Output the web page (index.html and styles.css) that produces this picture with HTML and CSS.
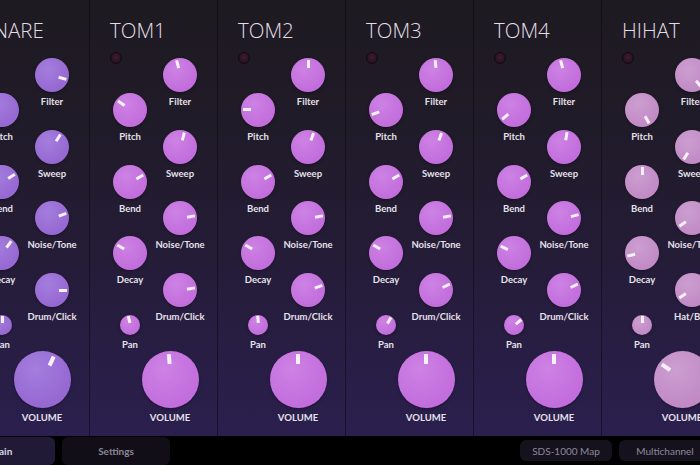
FILE: index.html
```html
<!DOCTYPE html>
<html lang="en">

<head>
    <meta charset="UTF-8">
    <meta name="viewport" content="width=device-width, initial-scale=1.0">
    <title>Drum Rack</title>
    <link rel="stylesheet" href="styles.css">
</head>

<body>
    <div class="rack" id="rack"></div>

    <div class="bar">
        <div class="tabs">
            <div class="tab active">Main</div>
            <div class="tab">Settings</div>
        </div>
        <div class="buttons">
            <div class="btn">SDS-1000 Map</div>
            <div class="btn">Multichannel</div>
        </div>
    </div>

    <script>
        // name, colour, right column angles, left column angles, volume angle, last right label
        const channels = [
            ['SNARE', 'snare', [105, 32, 70, 90], [-60, 57, 36, 0], 25, 'Drum/Click'],
            ['TOM1', 'tom', [-15, 15, 80, 80], [-55, 60, -60, -15], -5, 'Drum/Click'],
            ['TOM2', 'tom', [0, 20, 80, 70], [-90, 60, -60, -5], 0, 'Drum/Click'],
            ['TOM3', 'tom', [-5, 20, 80, 65], [-110, 60, -60, 30], 0, 'Drum/Click'],
            ['TOM4', 'tom', [-15, 10, 75, 65], [-130, 60, -65, 50], 0, 'Drum/Click'],
            ['HIHAT', 'hat', [140, -148, -125, -124], [150, 0, -104, 0], -55, 'Hat/Bell']
        ];

        function control(label, angle, size) {
            const ctl = document.createElement('div');
            ctl.className = 'ctl ' + size;
            ctl.innerHTML =
                '<div class="knob" style="--a:' + angle + 'deg"><span class="tick"></span></div>' +
                '<div class="label">' + label + '</div>';
            return ctl;
        }

        const rack = document.getElementById('rack');

        channels.forEach(function (ch) {
            const channel = document.createElement('div');
            channel.className = 'channel ' + ch[1];

            const title = document.createElement('div');
            title.className = 'title';
            title.textContent = ch[0];
            channel.appendChild(title);

            const knobs = document.createElement('div');
            knobs.className = 'knobs';

            const left = document.createElement('div');
            left.className = 'col left';
            const led = document.createElement('div');
            led.className = 'led';
            left.appendChild(led);
            ['Pitch', 'Bend', 'Decay'].forEach(function (name, i) {
                left.appendChild(control(name, ch[3][i], 'mid'));
            });
            left.appendChild(control('Pan', ch[3][3], 'small'));

            const right = document.createElement('div');
            right.className = 'col right';
            ['Filter', 'Sweep', 'Noise/Tone', ch[5]].forEach(function (name, i) {
                right.appendChild(control(name, ch[2][i], 'mid'));
            });

            knobs.appendChild(left);
            knobs.appendChild(right);
            channel.appendChild(knobs);
            channel.appendChild(control('VOLUME', ch[4], 'big'));

            rack.appendChild(channel);
        });
    </script>
</body>

</html>
```

FILE: styles.css
```css
body {
    margin: 0;
    width: 700px;
    height: 465px;
    overflow: hidden;
    background-color: #000;
    font-family: Lato, "Noto Sans", sans-serif;
}

.rack {
    display: flex;
    height: 436px;
    margin-left: -38px;
    background: linear-gradient(180deg, #1e1a21 0%, #201b29 30%, #251c38 60%, #2b1f4e 100%);
}

.channel {
    flex: 0 0 128px;
    box-sizing: border-box;
    padding-left: 10px;
    border-right: 1px solid rgba(0, 0, 0, 0.4);
    display: flex;
    flex-direction: column;
    align-items: flex-start;
}

.channel.snare {
    --c: #9668d2;
    --hl: #a47ddd;
}

.channel.tom {
    --c: #c26ddc;
    --hl: #cd82e4;
}

.channel.hat {
    --c: #c18ac5;
    --hl: #cc9ed0;
}

.title {
    margin: 18px 0 0 10px;
    font-family: "Open Sans", "Noto Sans", sans-serif;
    font-size: 20.5px;
    font-weight: 300;
    line-height: 24px;
    color: #e2dee6;
}

.knobs {
    display: flex;
    margin-top: 10px;
}

.col {
    display: flex;
    flex-direction: column;
    align-items: center;
    gap: 21.5px;
}

.left {
    width: 60px;
}

.right {
    width: 40px;
    padding-top: 6px;
}

.led {
    align-self: flex-start;
    width: 12px;
    height: 12px;
    margin: -0.5px 0 8px 10px;
    box-sizing: border-box;
    border-radius: 50%;
    border: 1.5px solid #13090f;
    background: radial-gradient(circle at 50% 40%, #3e1c31, #1e0e19);
}

.ctl {
    display: flex;
    flex-direction: column;
    align-items: center;
}

.knob {
    position: relative;
    border-radius: 50%;
    background: radial-gradient(circle at 38% 32%, var(--hl), var(--c) 70%);
    box-shadow: 0 1px 3px rgba(0, 0, 0, 0.35);
}

.tick {
    position: absolute;
    inset: 0;
    transform: rotate(var(--a));
}

.tick::before {
    content: '';
    position: absolute;
    left: 50%;
    top: 2px;
    width: 3px;
    height: 8px;
    margin-left: -1.5px;
    background-color: #f6f1f8;
}

.mid .knob {
    width: 34px;
    height: 34px;
}

.small {
    margin-top: 7.5px;
}

.small .knob {
    width: 20px;
    height: 20px;
}

.small .tick::before {
    top: 1px;
    height: 7px;
}

.big {
    width: 57px;
    margin-left: 41.5px;
}

.big .knob {
    width: 57px;
    height: 57px;
}

.big .tick::before {
    top: 3px;
    width: 4px;
    height: 10px;
    margin-left: -2px;
}

.label {
    margin-top: 4px;
    font-size: 9.5px;
    font-weight: 700;
    line-height: 12px;
    white-space: nowrap;
    color: #e6e1ec;
}

.bar {
    display: flex;
    justify-content: space-between;
    width: 764px;
    height: 29px;
    margin-left: -53px;
}

.tabs,
.buttons {
    display: flex;
    gap: 7px;
}

.tab {
    width: 108px;
    height: 28px;
    margin-top: 1px;
    border-radius: 6px;
    display: flex;
    justify-content: center;
    align-items: center;
    font-size: 10px;
    font-weight: 700;
    color: #8b8697;
    background-color: #110e17;
}

.tab.active {
    color: #d9d3e6;
    background-color: #211a37;
}

.btn {
    width: 92px;
    height: 21px;
    margin-top: 4px;
    border-radius: 6px;
    display: flex;
    justify-content: center;
    align-items: center;
    font-size: 10px;
    color: #8e899b;
    background-color: #15121e;
}
```
